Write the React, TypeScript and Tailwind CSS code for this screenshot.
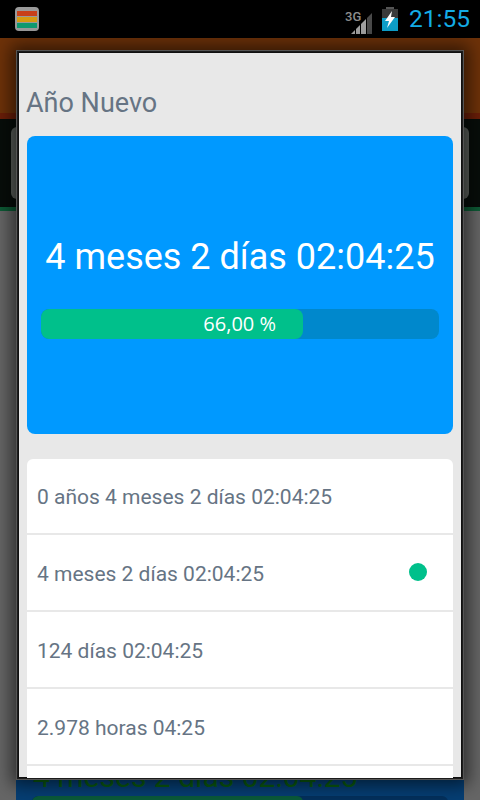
import React from "react";

const rows = [
  { t: "0 años 4 meses 2 días 02:04:25", h: "h-[76px]" },
  { t: "4 meses 2 días 02:04:25", dot: true, h: "h-[77px]" },
  { t: "124 días 02:04:25", h: "h-[77px]" },
  { t: "2.978 horas 04:25", h: "h-[77px]" },
];

function Signal() {
  return (
    <svg width="30" height="30" viewBox="0 0 30 30" className="block">
      <text x="2" y="17" fontSize="13" fontWeight="500" fill="#8c8c8c" fontFamily="Roboto, sans-serif">3G</text>
      <polygon points="8,30 12,30 12,26" fill="#a0a0a0" />
      <polygon points="13,30 17,30 17,21 13,25" fill="#a0a0a0" />
      <polygon points="18,30 23,30 23,15 18,20" fill="#a0a0a0" />
      <polygon points="24,30 29,30 29,9 24,14" fill="#4a4a4a" />
    </svg>
  );
}

function Battery() {
  return (
    <svg width="16" height="24" viewBox="0 0 16 24" className="block">
      <rect x="4" y="0" width="8" height="2" fill="#555" />
      <rect x="0" y="2" width="16" height="22" fill="#3a3a3a" />
      <rect x="0" y="11" width="16" height="13" fill="#0e9fc9" />
      <polygon points="10,4 3,14 7,14 5,21 13,10 9,10" fill="#ffffff" />
    </svg>
  );
}

export default function App() {
  return (
    <div className="relative h-[800px] w-[480px] overflow-hidden bg-black font-['Roboto',sans-serif]">
      <div className="flex h-[38px] items-center justify-between bg-black pl-[15px] pr-[10px]">
        <div className="flex h-[24px] w-[24px] flex-col justify-center gap-[1px] rounded-[4px] bg-[#9a9a9a] px-[2px]">
          <div className="h-[5px] bg-[#c8401a]" />
          <div className="h-[5px] bg-[#d69a10]" />
          <div className="h-[5px] bg-[#0f9a70]" />
        </div>
        <div className="flex items-center">
          <Signal />
          <div className="ml-[9px] mr-[11px]"><Battery /></div>
          <span className="text-[24.5px] leading-none font-normal text-[#14ade6]">21:55</span>
        </div>
      </div>

      <div className="flex h-[762px] flex-col bg-[#666666]">
        <div className="h-[75px] bg-[#6e3209]" />
        <div className="h-[6px] bg-[#6a1e08]" />
        <div className="flex h-[88px] bg-[#070d0a] px-[11px] py-[8px]">
          <div className="flex-1 rounded-[6px] bg-[#5c605c]" />
        </div>
        <div className="h-[4px] bg-[#0d5a35]" />
        <div className="min-h-0 flex-1 bg-[#666666]" />
        <div className="mx-[16px] flex h-[60px] flex-none flex-col items-center rounded-t-[6px] bg-[#063e73]">
          <div className="ml-[17px] mt-[19px] self-start text-[30px] leading-[36px] whitespace-nowrap text-[#0a5a10]">4 meses 2 días 02:04:25</div>
          <div className="mt-[1px] h-[10px] w-[416px] flex-none overflow-hidden rounded-t-[6px] bg-[#04305c]">
            <div className="h-full w-[271px] rounded-t-[6px] bg-[#0a5a3a]" />
          </div>
        </div>
      </div>

      <div className="absolute left-[17px] top-[51px] h-[728px] w-[446px] overflow-hidden border border-[#1c1c1c] outline outline-1 outline-[#555555] shadow-[0_0_16px_6px_rgba(0,0,0,0.55)]">
        <div className="h-full border border-[#111111] bg-[#e8e8e8] px-[8px]">
          <h1 className="-ml-px mt-[35px] text-[27px] leading-[30px] font-normal text-[#667484]">Año Nuevo</h1>
          <div className="mt-[18px] flex h-[298px] flex-col items-center rounded-[8px] bg-[#0099ff] px-[14px] pt-[98px]">
            <div className="text-[36px] leading-[46px] whitespace-nowrap text-white">4 meses 2 días 02:04:25</div>
            <div className="mt-[29px] h-[30px] w-full overflow-hidden rounded-[8px] bg-[#0088cc]">
              <div className="flex h-full w-[262px] items-center justify-end rounded-[8px] bg-[#00c08b] pr-[27px]">
                <span className="font-['Open_Sans',sans-serif] text-[20px] leading-none text-white">66,00 %</span>
              </div>
            </div>
          </div>
          <div className="mt-[25px] h-[400px] rounded-t-[6px] bg-white">
            {rows.map((r) => (
              <div key={r.t} className={`flex ${r.h} items-center justify-between border-b-2 border-[#e8e8e8] pl-[10px] pr-[26px] pt-[4px] text-[21px] text-[#667484]`}>
                <span>{r.t}</span>
                {r.dot && <span className="mb-[6px] h-[18px] w-[18px] rounded-full bg-[#00c08b]" />}
              </div>
            ))}
          </div>
        </div>
      </div>
    </div>
  );
}
